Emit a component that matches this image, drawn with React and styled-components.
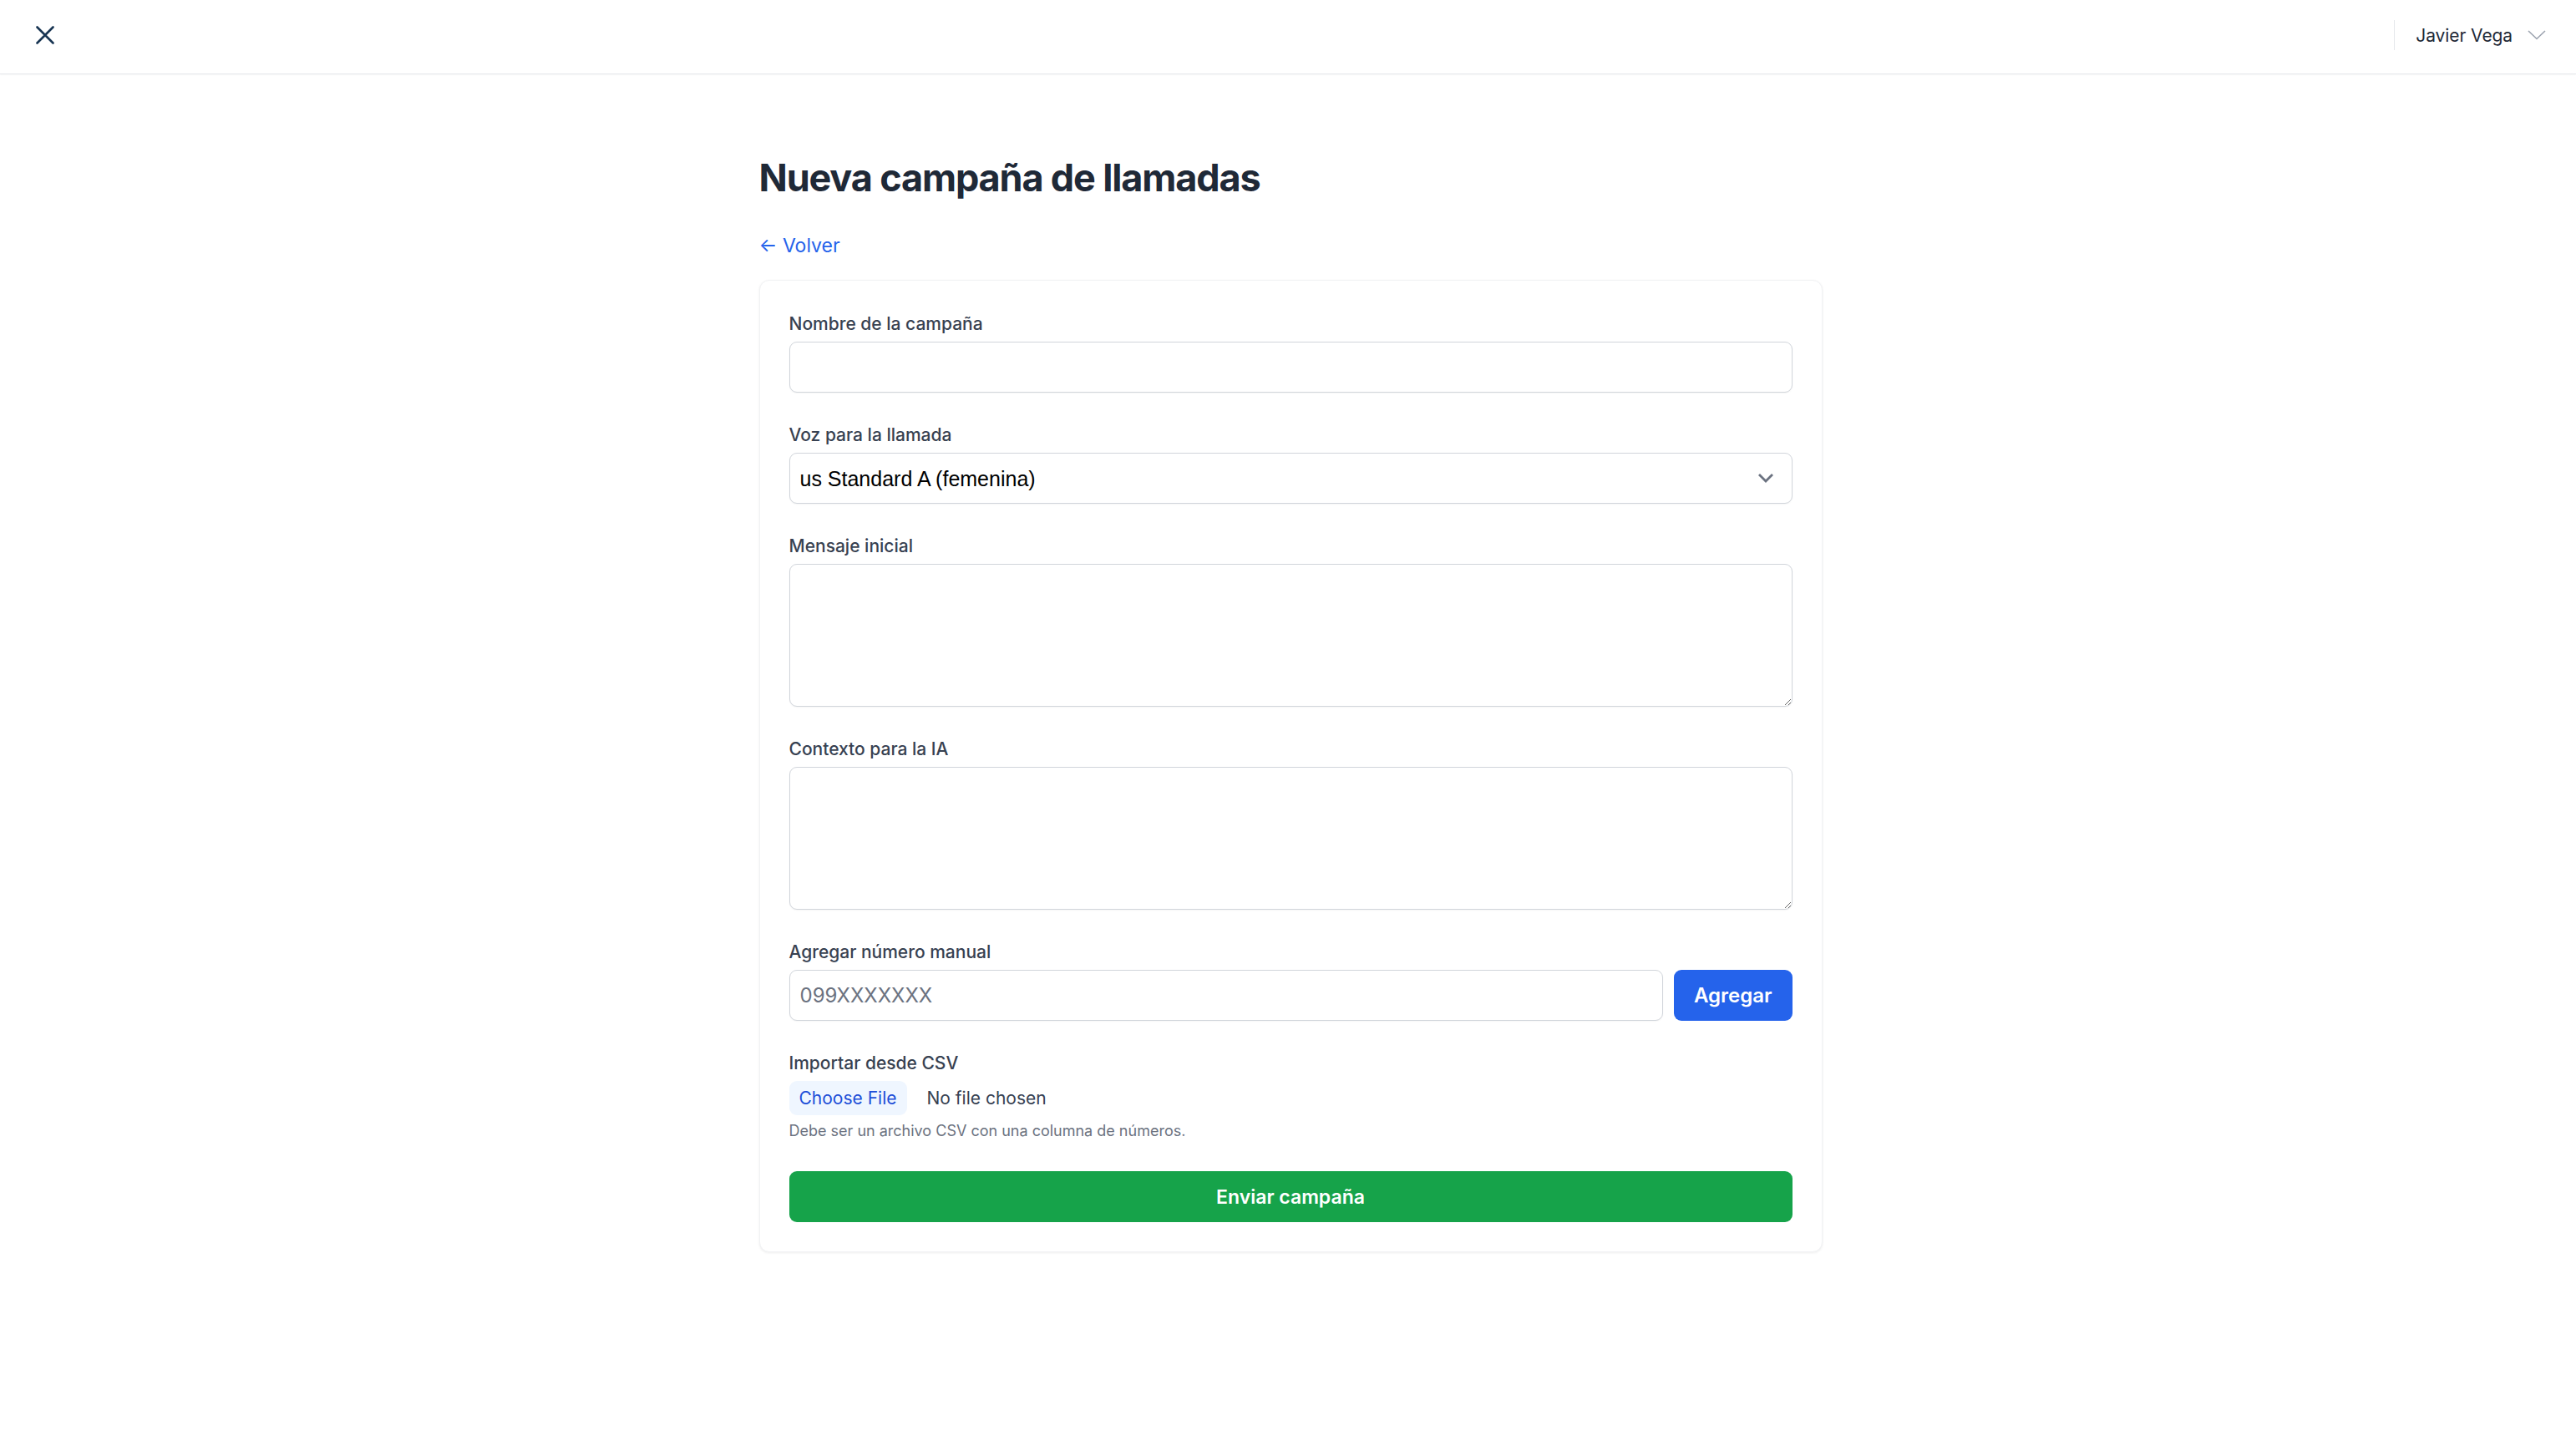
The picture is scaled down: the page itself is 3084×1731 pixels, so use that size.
import React from "react";
import { styled, createGlobalStyle } from "styled-components";

const GlobalStyle = createGlobalStyle`
  html, body {
    margin: 0;
    padding: 0;
    background: #ffffff;
    font-family: Inter, "Noto Sans", sans-serif;
    color: #1f2937;
  }
  * { box-sizing: border-box; }
`;

const App = () => {
  return (
    <>
      <GlobalStyle />
      <TopBar>
        <CloseButton aria-label="Cerrar">
          <svg width="22" height="22" viewBox="0 0 22 22">
            <path d="M1.5 1.5 L20.5 20.5 M20.5 1.5 L1.5 20.5" stroke="#173452" strokeWidth="2.6" strokeLinecap="round" />
          </svg>
        </CloseButton>
        <UserMenu>
          <Divider />
          <UserName>Javier Vega</UserName>
          <svg width="22" height="12" viewBox="0 0 22 12">
            <path d="M1 1 L11 10.5 L21 1" fill="none" stroke="#9ca3af" strokeWidth="1.6" />
          </svg>
        </UserMenu>
      </TopBar>

      <Main>
        <Title>Nueva campaña de llamadas</Title>
        <BackLink href="#">← Volver</BackLink>

        <Card>
          <Field>
            <Label>Nombre de la campaña</Label>
            <TextInput type="text" />
          </Field>

          <Field>
            <Label>Voz para la llamada</Label>
            <SelectWrap>
              <Select defaultValue="a">
                <option value="a">us Standard A (femenina)</option>
              </Select>
              <SelectChevron width="20" height="12" viewBox="0 0 20 12">
                <path d="M2 2 L10 10 L18 2" fill="none" stroke="#6b7280" strokeWidth="2.8" />
              </SelectChevron>
            </SelectWrap>
          </Field>

          <Field>
            <Label>Mensaje inicial</Label>
            <TextArea rows={4} />
          </Field>

          <Field>
            <Label>Contexto para la IA</Label>
            <TextArea rows={4} />
          </Field>

          <Field>
            <Label>Agregar número manual</Label>
            <InputRow>
              <TextInput type="text" placeholder="099XXXXXXX" />
              <Button $tone="blue">Agregar</Button>
            </InputRow>
          </Field>

          <Field>
            <Label>Importar desde CSV</Label>
            <FileInput type="file" accept=".csv" />
            <Hint>Debe ser un archivo CSV con una columna de números.</Hint>
          </Field>

          <Button $tone="green" $full>Enviar campaña</Button>
        </Card>
      </Main>
    </>
  );
};

export default App;

const TopBar = styled.header`
  height: 89px;
  display: flex;
  align-items: center;
  justify-content: space-between;
  padding: 0 36px 0 43px;
  border-bottom: 1px solid #e5e7eb;
  box-shadow: 0 1px 2px rgba(0, 0, 0, 0.03);
`;

const CloseButton = styled.button`
  display: flex;
  align-items: center;
  padding: 0;
  margin-top: -4px;
  border: 0;
  background: none;
  cursor: pointer;
`;

const UserMenu = styled.div`
  display: flex;
  align-items: center;
  gap: 18px;
  margin-top: -4px;
`;

const Divider = styled.div`
  width: 1px;
  height: 36px;
  background: #e5e7eb;
  margin-right: 7px;
`;

const UserName = styled.span`
  font-size: 21px;
  letter-spacing: -0.1px;
  color: #1f2937;
`;

const Main = styled.main`
  max-width: 1279px;
  margin: 0 auto;
  padding: 97px 0 120px 6px;
`;

const Title = styled.h1`
  margin: 0;
  font-size: 45px;
  line-height: 54px;
  font-weight: 700;
  color: #1f2937;
  letter-spacing: -1.15px;
`;

const BackLink = styled.a`
  display: inline-block;
  margin-top: 36px;
  font-size: 23px;
  line-height: 36px;
  color: #2563eb;
  text-decoration: none;
`;

const Card = styled.section`
  margin-top: 23px;
  background: #ffffff;
  border: 1px solid #f1f2f4;
  border-radius: 12px;
  box-shadow: 0 1px 3px rgba(0, 0, 0, 0.07);
  padding: 37px 35px 35px;
  display: flex;
  flex-direction: column;
  gap: 36px;
`;

const Field = styled.div`
  display: flex;
  flex-direction: column;
`;

const Label = styled.label`
  font-size: 21px;
  line-height: 30px;
  font-weight: 500;
  color: #374151;
  margin-bottom: 6px;
`;

const TextInput = styled.input`
  flex: 1 1 auto;
  min-width: 0;
  height: 61px;
  width: 100%;
  padding: 0 12px;
  border: 1px solid #d1d5db;
  border-radius: 9px;
  font-family: Inter, sans-serif;
  font-size: 24px;
  color: #111827;
  box-shadow: 0 1px 2px rgba(0, 0, 0, 0.04);
  outline: none;

  &::placeholder {
    color: #6b7280;
  }
`;

const SelectWrap = styled.div`
  position: relative;
`;

const Select = styled.select`
  appearance: none;
  width: 100%;
  height: 61px;
  padding: 0 12px;
  border: 1px solid #d1d5db;
  border-radius: 9px;
  background: #ffffff;
  font-family: "Liberation Sans", Arial, sans-serif;
  font-size: 25px;
  color: #000000;
  box-shadow: 0 1px 2px rgba(0, 0, 0, 0.04);
  outline: none;
`;

const SelectChevron = styled.svg`
  position: absolute;
  right: 22px;
  top: 24px;
  pointer-events: none;
`;

const TextArea = styled.textarea`
  height: 171px;
  width: 100%;
  padding: 12px;
  border: 1px solid #d1d5db;
  border-radius: 9px;
  font-family: Inter, sans-serif;
  font-size: 24px;
  box-shadow: 0 1px 2px rgba(0, 0, 0, 0.04);
  outline: none;
`;

const InputRow = styled.div`
  display: flex;
  gap: 13px;
`;

const Button = styled.button`
  height: 61px;
  width: ${(p) => (p.$full ? "100%" : "auto")};
  padding: 0 24px;
  border: 0;
  border-radius: 9px;
  background: ${(p) => (p.$tone === "green" ? "#16a34a" : "#2563eb")};
  color: #ffffff;
  font-family: Inter, sans-serif;
  font-size: ${(p) => (p.$full ? "23px" : "24px")};
  font-weight: 600;
  cursor: pointer;
`;

const FileInput = styled.input`
  font-family: Inter, sans-serif;
  font-size: 21px;
  color: #374151;
  height: 41px;

  &::file-selector-button {
    height: 41px;
    margin-right: 24px;
    padding: 0 12px;
    border: 0;
    border-radius: 9px;
    background: #eff6ff;
    color: #1d4ed8;
    font-family: Inter, sans-serif;
    font-size: 21px;
    cursor: pointer;
  }
`;

const Hint = styled.p`
  margin: 7px 0 0;
  font-size: 18px;
  line-height: 24px;
  color: #6b7280;
`;
